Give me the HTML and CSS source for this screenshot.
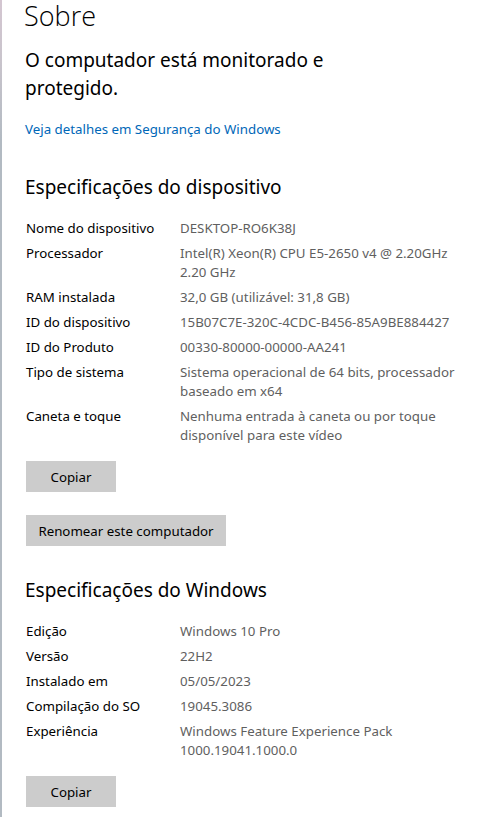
FILE: index.html
```html
<!DOCTYPE html>
<html lang="pt">
<head>
<meta charset="utf-8">
<title>Sobre</title>
<link rel="stylesheet" href="styles.css">
</head>
<body>
<div class="edge"></div>
<main class="page">
  <h1 class="title">Sobre</h1>
  <p class="status">O computador está monitorado e protegido.</p>
  <a class="link" href="#">Veja detalhes em Segurança do Windows</a>

  <h2 class="section">Especificações do dispositivo</h2>
  <dl class="specs">
    <dt>Nome do dispositivo</dt><dd>DESKTOP-RO6K38J</dd>
    <dt>Processador</dt><dd>Intel(R) Xeon(R) CPU E5-2650 v4 @ 2.20GHz 2.20 GHz</dd>
    <dt>RAM instalada</dt><dd>32,0 GB (utilizável: 31,8 GB)</dd>
    <dt>ID do dispositivo</dt><dd>15B07C7E-320C-4CDC-B456-85A9BE884427</dd>
    <dt>ID do Produto</dt><dd>00330-80000-00000-AA241</dd>
    <dt>Tipo de sistema</dt><dd>Sistema operacional de 64 bits, processador baseado em x64</dd>
    <dt>Caneta e toque</dt><dd>Nenhuma entrada à caneta ou por toque disponível para este vídeo</dd>
  </dl>
  <button class="btn btn-copy" type="button">Copiar</button>
  <button class="btn btn-rename" type="button">Renomear este computador</button>

  <h2 class="section section-win">Especificações do Windows</h2>
  <dl class="specs">
    <dt>Edição</dt><dd>Windows 10 Pro</dd>
    <dt>Versão</dt><dd>22H2</dd>
    <dt>Instalado em</dt><dd>05/05/2023</dd>
    <dt>Compilação do SO</dt><dd>19045.3086</dd>
    <dt>Experiência</dt><dd>Windows Feature Experience Pack 1000.19041.1000.0</dd>
  </dl>
  <button class="btn btn-copy" type="button">Copiar</button>
</main>
</body>
</html>
```

FILE: styles.css
```css
* { box-sizing: border-box; }
html, body { margin: 0; padding: 0; background: #ffffff; }
body {
  font-family: "Noto Sans", "Open Sans", sans-serif;
  color: #000000;
  height: 817px;
  overflow: hidden;
  display: flex;
}
.edge {
  width: 2px;
  flex: none;
  background: linear-gradient(#d4c6d1 0, #c9c4cc 60px, #b2bac2 140px, #b2bac2 100%);
}
.page {
  flex: 1;
  padding-left: 22px;
  display: flex;
  flex-direction: column;
  align-items: flex-start;
}
.title {
  margin: 0;
  font-family: "Open Sans", "Noto Sans", sans-serif;
  font-size: 27px;
  line-height: 32px;
  font-weight: 300;
}
.status {
  margin: 14px 0 0 1px;
  width: 310px;
  font-size: 19px;
  line-height: 28px;
  font-weight: 400;
}
.link {
  margin: 17px 0 0 1px;
  font-size: 13.3px;
  line-height: 20px;
  color: #0067b8;
  text-decoration: none;
}
.section {
  margin: 34px 0 0 1px;
  font-size: 19px;
  line-height: 28px;
  font-weight: 400;
}
.section-win { margin-top: 30px; }
.specs {
  margin: 18px 0 0 2px;
  display: grid;
  grid-template-columns: 154px 285px;
  row-gap: 6px;
  font-size: 13.3px;
  line-height: 19px;
}
.specs dt { margin: 0; color: #000000; }
.specs dd { margin: 0; color: #5f5f5f; }
.btn {
  margin-left: 2px;
  border: 0;
  background: #cccccc;
  font-family: inherit;
  font-size: 13.3px;
  color: #000000;
  height: 31px;
  padding: 0;
}
.btn-copy { width: 90px; margin-top: 16px; }
.btn-rename { width: 200px; margin-top: 23px; }
```
